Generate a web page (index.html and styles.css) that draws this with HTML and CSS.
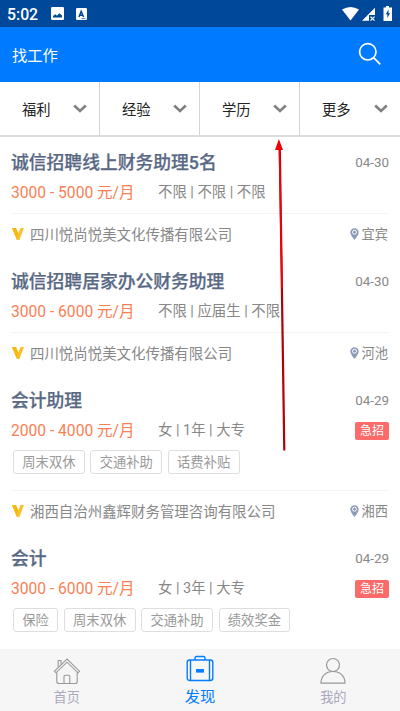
FILE: index.html
```html
<!DOCTYPE html>
<html lang="zh-CN">
<head>
<meta charset="utf-8">
<title>找工作</title>
<link rel="stylesheet" href="styles.css">
</head>
<body>
<div class="app">
  <div class="status">
    <span class="clock">5:02</span>
    <svg class="st-pic" width="13" height="13" viewBox="0 0 13 13"><rect width="13" height="13" rx="1.2" fill="#fff"/><path d="M2 10.5V9L4.3 7.2 6 8.8 8.4 6.3 11 8.5V10.5z" fill="#00499a"/></svg>
    <svg class="st-a" width="11" height="12" viewBox="0 0 11 12"><rect width="11" height="12" rx="1.2" fill="#fff"/><path d="M3 9 5.2 3.2 7.6 9M3.8 7.2H6.8" fill="none" stroke="#00499a" stroke-width="1.5"/><path d="M5.5 10.6H9.5" stroke="#00499a" stroke-width=".7"/></svg>
    <svg class="st-right" width="52" height="16" viewBox="0 0 52 16"><path d="M0 3.6Q8.5-1.8 17 3.6L8.5 14.5z" fill="#fff"/><path d="M20 14.7 33 1.8V9H27v5.7z" fill="#fff"/><path d="M28.5 10.7l4 4M32.5 10.7l-4 4" stroke="#fff" stroke-width="1.2"/><path d="M44 0h3v1.5h3V15h-8.5V1.5H44z" fill="#fff"/><path d="M46.5 3.5 43.8 8.3H45.3V12L48 7.2H46.5z" fill="#00499a"/></svg>
  </div>
  <header class="top">
    <h1>找工作</h1>
    <svg width="24" height="24" viewBox="0 0 24 24" fill="none" stroke="#fff" stroke-width="1.7"><circle cx="9.8" cy="9.8" r="8.2"/><path d="M15.6 15.6 22.3 22.3"/></svg>
  </header>
  <nav class="filters">
    <div class="filter"><span>福利</span><svg class="chev" viewBox="0 0 14 9"><path d="M1.2 1.5 7 7 12.8 1.5"/></svg></div>
    <div class="filter"><span>经验</span><svg class="chev" viewBox="0 0 14 9"><path d="M1.2 1.5 7 7 12.8 1.5"/></svg></div>
    <div class="filter"><span>学历</span><svg class="chev" viewBox="0 0 14 9"><path d="M1.2 1.5 7 7 12.8 1.5"/></svg></div>
    <div class="filter"><span>更多</span><svg class="chev" viewBox="0 0 14 9"><path d="M1.2 1.5 7 7 12.8 1.5"/></svg></div>
  </nav>
  <main class="jobs">
    <article class="job">
      <div class="row head"><h2>诚信招聘线上财务助理5名</h2><time>04-30</time></div>
      <div class="row info"><span class="pay">3000 - 5000 元/月</span><span class="req">不限 | 不限 | 不限</span></div>
      <div class="row firm"><svg class="vip" viewBox="0 0 12 12"><path d="M0 0H4L6.2 5.6 8.6 0H12L7.4 12H5z" fill="#fbc02d"/><path d="M0 0H4L6.2 5.6 5 12z" fill="#f7b70c"/></svg><span class="name">四川悦尚悦美文化传播有限公司</span><svg class="pin" viewBox="0 0 9 12"><path d="M4.5.2A4.2 4.2 0 0 0 .3 4.4C.3 7.2 4.5 11.8 4.5 11.8S8.7 7.2 8.7 4.4A4.2 4.2 0 0 0 4.5.2z" fill="#8b9bb8"/><circle cx="4.5" cy="4.2" r="2" fill="#8b9bb8" stroke="#fff"/></svg><span>宜宾</span></div>
    </article>
    <article class="job">
      <div class="row head"><h2>诚信招聘居家办公财务助理</h2><time>04-30</time></div>
      <div class="row info"><span class="pay">3000 - 6000 元/月</span><span class="req">不限 | 应届生 | 不限</span></div>
      <div class="row firm"><svg class="vip" viewBox="0 0 12 12"><path d="M0 0H4L6.2 5.6 8.6 0H12L7.4 12H5z" fill="#fbc02d"/><path d="M0 0H4L6.2 5.6 5 12z" fill="#f7b70c"/></svg><span class="name">四川悦尚悦美文化传播有限公司</span><svg class="pin" viewBox="0 0 9 12"><path d="M4.5.2A4.2 4.2 0 0 0 .3 4.4C.3 7.2 4.5 11.8 4.5 11.8S8.7 7.2 8.7 4.4A4.2 4.2 0 0 0 4.5.2z" fill="#8b9bb8"/><circle cx="4.5" cy="4.2" r="2" fill="#8b9bb8" stroke="#fff"/></svg><span>河池</span></div>
    </article>
    <article class="job">
      <div class="row head"><h2>会计助理</h2><time>04-29</time></div>
      <div class="row info"><span class="pay">2000 - 4000 元/月</span><span class="req">女 | 1年 | 大专</span><span class="urgent">急招</span></div>
      <div class="tags"><span>周末双休</span><span>交通补助</span><span>话费补贴</span></div>
      <div class="row firm"><svg class="vip" viewBox="0 0 12 12"><path d="M0 0H4L6.2 5.6 8.6 0H12L7.4 12H5z" fill="#fbc02d"/><path d="M0 0H4L6.2 5.6 5 12z" fill="#f7b70c"/></svg><span class="name">湘西自治州鑫辉财务管理咨询有限公司</span><svg class="pin" viewBox="0 0 9 12"><path d="M4.5.2A4.2 4.2 0 0 0 .3 4.4C.3 7.2 4.5 11.8 4.5 11.8S8.7 7.2 8.7 4.4A4.2 4.2 0 0 0 4.5.2z" fill="#8b9bb8"/><circle cx="4.5" cy="4.2" r="2" fill="#8b9bb8" stroke="#fff"/></svg><span>湘西</span></div>
    </article>
    <article class="job">
      <div class="row head"><h2>会计</h2><time>04-29</time></div>
      <div class="row info"><span class="pay">3000 - 6000 元/月</span><span class="req">女 | 3年 | 大专</span><span class="urgent">急招</span></div>
      <div class="tags"><span>保险</span><span>周末双休</span><span>交通补助</span><span>绩效奖金</span></div>
    </article>
  </main>
  <nav class="tabs">
    <div class="tab"><svg width="28" height="28" viewBox="0 0 28 28" fill="none" stroke="#999" stroke-width="1.1"><path d="M1.5 14.2 14 2 26.5 14.2 25 15.8 14 5.2 3 15.8z"/><path d="M5.2 10.2V3.5H8V7.5M3.8 15.2V24.5Q3.8 26.5 5.8 26.5H22.2Q24.2 26.5 24.2 24.5V15.2M11 26.5V19.5Q11 18.3 12.2 18.3H15.6Q16.8 18.3 16.8 19.5V26.5"/></svg><span>首页</span></div>
    <div class="tab on"><svg width="28" height="28" viewBox="0 0 28 28" fill="none" stroke="#0a7cff" stroke-width="1.4"><rect x="1.2" y="5" width="25.6" height="20.5" rx="2.5"/><path d="M4.5 5v20.5M23.5 5v20.5M9 5V3Q9 1.5 10.5 1.5H17.5Q19 1.5 19 3V5"/><rect x="10" y="14" width="8" height="3.6" fill="#0a7cff" stroke="none"/></svg><span>发现</span></div>
    <div class="tab"><svg width="28" height="28" viewBox="0 0 28 28" fill="none" stroke="#999" stroke-width="1.2"><circle cx="14" cy="8" r="6.5"/><path d="M2 26.1C2 19 7 14.5 14 14.5S26 19 26 26.1z"/></svg><span>我的</span></div>
  </nav>
  <svg class="arrow" width="14" height="314" viewBox="0 0 14 314"><path d="M4.8 10 9.3 312.5" stroke="#b00008" stroke-width="2.2"/><path d="M4.4 10 7 150" stroke="#f60008" stroke-width="1.6"/><path d="M3.9 1 0 12H8z" fill="#ee0000"/></svg>
</div>
</body>
</html>
```

FILE: styles.css
```css
* { box-sizing: border-box; }
body {
  margin: 0;
  font-family: Roboto, "Noto Sans CJK SC", sans-serif;
  color: #888;
  background: #fff;
}
h1, h2 { margin: 0; }
svg { flex: none; display: block; }
.app {
  position: relative;
  width: 400px;
  height: 711px;
  overflow: hidden;
  display: flex;
  flex-direction: column;
}
.status {
  height: 27px;
  flex: none;
  display: flex;
  align-items: center;
  padding: 0 6px 0 7px;
  background: #00499a;
  color: #fff;
}
.clock { width: 44px; padding-top: 1px; font-size: 15.8px; line-height: 27px; font-weight: 500; }
.st-a { margin-left: 12px; }
.st-right { margin-left: auto; }
.top {
  height: 55px;
  flex: none;
  display: flex;
  align-items: center;
  justify-content: space-between;
  padding: 0 18px 2px 12px;
  background: #007aff;
  color: #fff;
}
.top h1 { font-size: 15.3px; font-weight: 400; }
.filters {
  height: 55px;
  flex: none;
  display: grid;
  grid-template-columns: repeat(4, 1fr);
  border-bottom: 2px solid #dcdcdc;
}
.filter {
  display: flex;
  align-items: center;
  justify-content: space-between;
  padding: 0 12px 0 22px;
  border-right: 1px solid #d4d4d4;
  font-size: 14.3px;
  color: #222;
}
.filter:last-child { border-right: 0; }
.chev { width: 14px; height: 9px; fill: none; stroke: #808080; stroke-width: 2.6; margin-top: -1px; }
.jobs { flex: 1; min-height: 0; overflow: hidden; padding: 0 11px; }
.job { padding-top: 9px; }
.row { display: flex; align-items: center; }
.head { height: 30px; justify-content: space-between; }
h2 {
  font-size: 17.8px;
  font-weight: 500;
  color: #596985;
  white-space: nowrap;
  -webkit-text-stroke: 0.25px #596985;
}
time { font-size: 13.4px; padding-top: 2px; color: #888; }
.info { height: 29px; font-size: 14.4px; }
.pay { width: 147px; font-size: 15.6px; color: #fa8054; white-space: nowrap; }
.req { white-space: nowrap; margin-top: -1px; }
.urgent {
  margin-left: auto;
  width: 34px;
  height: 18px;
  margin-top: 5px;
  line-height: 18px;
  border-radius: 2px;
  text-align: center;
  font-size: 12px;
  color: #fff;
  background: #fc6b69;
}
.firm {
  height: 43px;
  margin-top: 8px;
  padding: 0 1px 3px;
  border-top: 1px solid #f3f3f3;
  font-size: 14.45px;
}
.firm > span:last-child { font-size: 13.3px; }
.vip { width: 12px; height: 12px; margin-right: 6px; }
.name { flex: 1; }
.pin { width: 9px; height: 12px; margin-right: 2px; }
.tags { display: flex; gap: 5.6px; padding: 7px 0 1px 2px; }
.tags + .firm { margin-top: 15px; }
.tags span {
  height: 24px;
  line-height: 23px;
  padding: 0 8.3px;
  border: 1px solid #dedede;
  border-radius: 3px;
  font-size: 13.3px;
  color: #999;
}
.tabs {
  height: 62px;
  flex: none;
  display: flex;
  justify-content: space-around;
  background: #f6f6f6;
}
.tab {
  flex: 1;
  display: flex;
  flex-direction: column;
  align-items: center;
  padding-top: 8px;
  font-size: 13.2px;
  line-height: 25px;
  color: #aaa9be;
}
.on { padding-top: 6px; font-size: 15.3px; line-height: 29px; color: #007aff; }
.arrow { position: absolute; left: 275px; top: 138px; }
```
